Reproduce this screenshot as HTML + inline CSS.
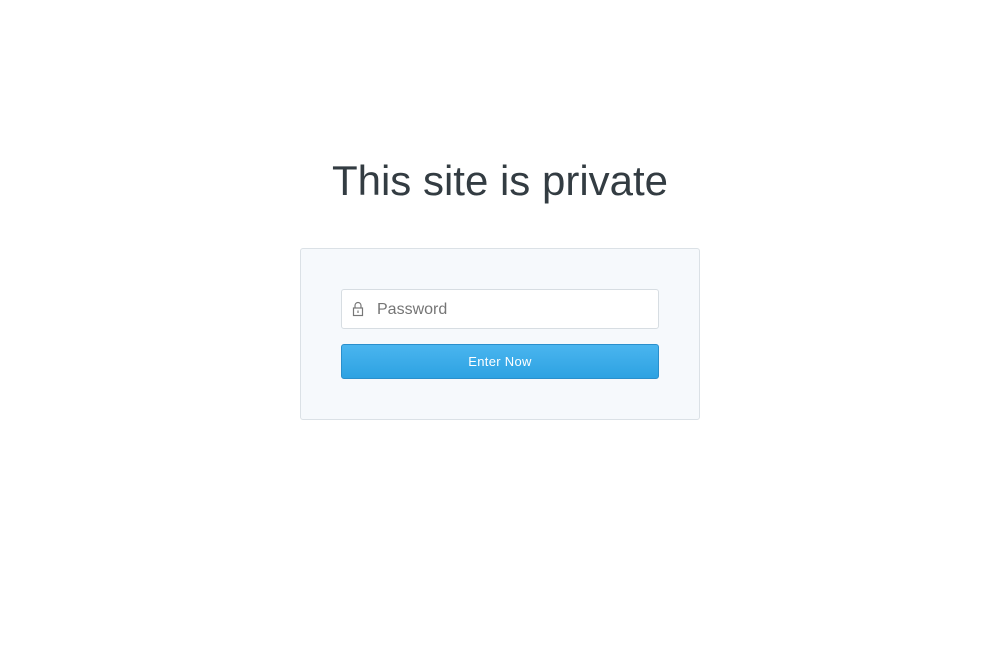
<!DOCTYPE html>
<html><head><style>
body{margin:0;background:#fff;font-family:"Liberation Sans",sans-serif;}
h1{position:absolute;top:156px;left:0;width:1000px;text-align:center;margin:0;font-weight:normal;font-size:42px;color:#333c42;line-height:50px}
.box{position:absolute;left:300px;top:248px;width:398px;height:170px;border:1px solid #dbe1e6;border-radius:3px;background:#f6f9fc}
.inp{position:absolute;left:40px;top:40px;width:316px;height:38px;border:1px solid #d7dde2;border-radius:3px;background:#fff}
.inp span{position:absolute;left:35px;top:11px;font-size:16px;color:#757575}
.inp svg{position:absolute;left:10px;top:11px}
.btn{position:absolute;left:40px;top:95px;width:316px;height:33px;border:1px solid #2a8fcc;border-radius:3px;background:linear-gradient(#4ab5ef,#2da2e2);color:#fff;font-size:13px;text-align:center;line-height:33px;letter-spacing:.3px}
</style></head><body>
<h1>This site is private</h1>
<div class="box">
<div class="inp"><svg width="12" height="16" viewBox="0 0 12 16"><path d="M3 7V4.5a3 3 0 0 1 6 0V7" fill="none" stroke="#777" stroke-width="1.2"/><rect x="1.5" y="7" width="9" height="7.5" fill="none" stroke="#777" stroke-width="1.2"/><rect x="5.4" y="9.5" width="1.2" height="2.5" fill="#777"/></svg><span>Password</span></div>
<div class="btn">Enter Now</div>
</div>
</body></html>
